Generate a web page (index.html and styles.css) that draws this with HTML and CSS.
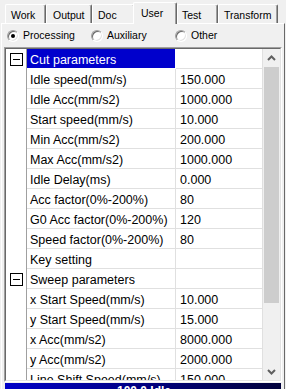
FILE: index.html
```html
<!DOCTYPE html>
<html lang="en">
<head>
  <meta charset="UTF-8" />
  <title>User Parameters</title>
  <meta name="viewport" content="width=device-width, initial-scale=1.0"/>
  <link rel="stylesheet" href="styles.css">
</head>
<body>
  <div class="tabs">
    <div class="tab tab-work">Work</div>
    <div class="tab tab-output">Output</div>
    <div class="tab tab-doc">Doc</div>
    <div class="tab tab-user active">User</div>
    <div class="tab tab-test">Test</div>
    <div class="tab tab-transform">Transform</div>
  </div>

  <div class="panel">
    <div class="radios">
      <div class="radio checked"><span class="radio-mark"></span>Processing</div>
      <div class="radio"><span class="radio-mark"></span>Auxiliary</div>
      <div class="radio"><span class="radio-mark"></span>Other</div>
    </div>

    <div class="tree">
      <div class="tree-inner">
        <div class="rows">
          <div class="row selected"><div class="gutter"><span class="expander"></span></div><div class="cell label">Cut parameters</div><div class="cell value"></div></div>
          <div class="row"><div class="gutter"></div><div class="cell label">Idle speed(mm/s)</div><div class="cell value">150.000</div></div>
          <div class="row"><div class="gutter"></div><div class="cell label">Idle Acc(mm/s2)</div><div class="cell value">1000.000</div></div>
          <div class="row"><div class="gutter"></div><div class="cell label">Start speed(mm/s)</div><div class="cell value">10.000</div></div>
          <div class="row"><div class="gutter"></div><div class="cell label">Min Acc(mm/s2)</div><div class="cell value">200.000</div></div>
          <div class="row"><div class="gutter"></div><div class="cell label">Max Acc(mm/s2)</div><div class="cell value">1000.000</div></div>
          <div class="row"><div class="gutter"></div><div class="cell label">Idle Delay(ms)</div><div class="cell value">0.000</div></div>
          <div class="row"><div class="gutter"></div><div class="cell label">Acc factor(0%-200%)</div><div class="cell value">80</div></div>
          <div class="row"><div class="gutter"></div><div class="cell label">G0 Acc factor(0%-200%)</div><div class="cell value">120</div></div>
          <div class="row"><div class="gutter"></div><div class="cell label">Speed factor(0%-200%)</div><div class="cell value">80</div></div>
          <div class="row"><div class="gutter"></div><div class="cell label">Key setting</div><div class="cell value"></div></div>
          <div class="row"><div class="gutter"><span class="expander"></span></div><div class="cell label">Sweep parameters</div><div class="cell value"></div></div>
          <div class="row"><div class="gutter"></div><div class="cell label">x Start Speed(mm/s)</div><div class="cell value">10.000</div></div>
          <div class="row"><div class="gutter"></div><div class="cell label">y Start Speed(mm/s)</div><div class="cell value">15.000</div></div>
          <div class="row"><div class="gutter"></div><div class="cell label">x Acc(mm/s2)</div><div class="cell value">8000.000</div></div>
          <div class="row"><div class="gutter"></div><div class="cell label">y Acc(mm/s2)</div><div class="cell value">2000.000</div></div>
          <div class="row"><div class="gutter"></div><div class="cell label">Line Shift Speed(mm/s)</div><div class="cell value">150.000</div></div>
        </div>

        <div class="scrollbar">
          <div class="scroll-btn">
            <svg width="9" height="6" viewBox="0 0 9 6"><polyline points="1,5 4.5,1.5 8,5" fill="none" stroke="#606060" stroke-width="2"/></svg>
          </div>
          <div class="scroll-thumb"></div>
          <div class="scroll-track"></div>
          <div class="scroll-btn">
            <svg width="9" height="6" viewBox="0 0 9 6"><polyline points="1,1 4.5,4.5 8,1" fill="none" stroke="#606060" stroke-width="2"/></svg>
          </div>
        </div>
      </div>
    </div>

    <div class="status">100.0 Idle</div>
  </div>
</body>
</html>
```

FILE: styles.css
```css
body {
  margin: 0;
  width: 286px;
  height: 389px;
  overflow: hidden;
  background: #f0f0f0;
  color: #000;
  font-family: "Liberation Sans", Arial, sans-serif;
  font-size: 10.5px;
}

/* Tab strip */
.tabs {
  display: flex;
  align-items: flex-end;
  height: 23px;
  padding-left: 5px;
}

.tab {
  box-sizing: border-box;
  height: 19px;
  padding: 3px 0 0 5px;
  line-height: 15px;
  white-space: nowrap;
  background: #f0f0f0;
  border: 1px solid #fff;
  border-bottom: none;
  border-right-color: #696969;
  border-radius: 2px 2px 0 0;
  box-shadow: inset -1px 0 #a0a0a0;
}

.tab-work { width: 41px; }
.tab-output { width: 46px; padding-left: 6px; }
.tab-doc { width: 43px; }
.tab-test { width: 41px; padding-left: 4px; }
.tab-transform { width: 60px; }

.tab.active {
  position: relative;
  z-index: 1;
  width: 44px;
  height: 22px;
  margin-left: -2px;
  margin-bottom: -1px;
  padding-left: 7px;
}

/* Panel */
.panel {
  box-sizing: border-box;
  width: 284px;
  height: 366px;
  margin-left: 1px;
  border-top: 1px solid #fff;
  border-left: 1px solid #fff;
  border-right: 1px solid #696969;
}

.radios {
  display: flex;
  align-items: center;
  height: 23px;
  padding-left: 5px;
}

.radio {
  display: flex;
  align-items: center;
  width: 84px;
  line-height: 15px;
}

.radio-mark {
  box-sizing: border-box;
  display: flex;
  align-items: center;
  justify-content: center;
  width: 12px;
  height: 12px;
  margin-right: 4px;
  border-radius: 50%;
  background: #fff;
  border: 1px solid;
  border-color: #a0a0a0 #fff #fff #a0a0a0;
  box-shadow: inset 1px 1px #696969, inset -1px -1px #e3e3e3;
}

.radio.checked .radio-mark::after {
  content: "";
  width: 4px;
  height: 4px;
  border-radius: 50%;
  background: #000;
}

/* Property tree */
.tree {
  box-sizing: border-box;
  width: 278px;
  margin-left: 2px;
  border: 1px solid;
  border-color: #a0a0a0 #fff #fff #a0a0a0;
}

.tree-inner {
  display: flex;
  height: 331px;
  overflow: hidden;
  background: #fff;
  border: 1px solid;
  border-color: #696969 #e3e3e3 #e3e3e3 #696969;
}

.rows {
  width: 257px;
  font-size: 12.5px;
}

.row {
  display: grid;
  grid-template-columns: 21px 149px 87px;
  height: 20px;
}

.gutter {
  display: flex;
  align-items: center;
  padding-left: 4px;
  border-right: 1px solid #a0a0a0;
}

.expander {
  box-sizing: border-box;
  display: flex;
  align-items: center;
  justify-content: center;
  width: 13px;
  height: 13px;
  border: 1px solid #000;
  background: #fff;
}

.expander::after {
  content: "";
  width: 7px;
  height: 1px;
  background: #000;
}

.cell {
  height: 19px;
  line-height: 23px;
  overflow: hidden;
  white-space: nowrap;
  border-bottom: 1px solid #e0e0e0;
  border-right: 1px solid #e0e0e0;
}

.label { padding-left: 3px; }
.value { padding-left: 4px; }

.selected .label {
  background: #0000cc;
  color: #fff;
  border-right-color: #fff;
  border-bottom-color: #fff;
}

/* Scrollbar */
.scrollbar {
  display: flex;
  flex-direction: column;
  width: 17px;
  background: #f0f0f0;
}

.scroll-btn {
  display: flex;
  align-items: center;
  justify-content: center;
  height: 17px;
}

.scroll-thumb {
  height: 236px;
  margin: 1px 1px 0;
  background: #cdcdcd;
}

.scroll-track {
  flex: 1;
}

/* Status bar */
.status {
  box-sizing: border-box;
  width: 276px;
  height: 10px;
  margin: 1px 0 0 3px;
  padding: 1px 0 0 112px;
  overflow: hidden;
  background: linear-gradient(to right, #0000c8, #00003a);
  color: #fff;
  font-size: 12px;
  font-weight: bold;
  line-height: 14px;
}
```
